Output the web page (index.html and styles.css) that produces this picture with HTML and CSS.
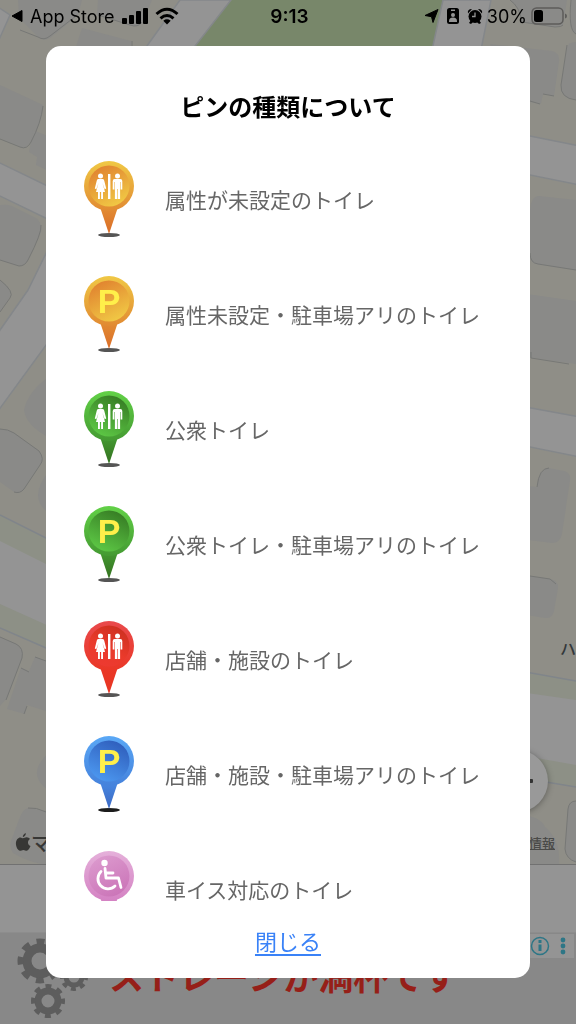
FILE: index.html
```html
<!DOCTYPE html>
<html lang="ja">
<head>
<meta charset="utf-8">
<meta name="viewport" content="width=device-width, initial-scale=1">
<title>ピンの種類について</title>
<link rel="stylesheet" href="styles.css">
</head>
<body>
<svg class="defs" aria-hidden="true">
  <defs>
    <linearGradient id="orange-rim" x1="0" y1="0" x2="0" y2="1"><stop offset="0" stop-color="#f0c845"/><stop offset="1" stop-color="#e18a32"/></linearGradient>
    <linearGradient id="orange-face" x1=".2" y1="0" x2=".7" y2="1"><stop offset="0" stop-color="#e0802f"/><stop offset="1" stop-color="#f1ca45"/></linearGradient>
    <linearGradient id="orange-tail" x1="0" y1="0" x2="0" y2="1"><stop offset="0" stop-color="#e28d33"/><stop offset="1" stop-color="#da6c28"/></linearGradient>
    <linearGradient id="green-rim" x1="0" y1="0" x2="0" y2="1"><stop offset="0" stop-color="#62d147"/><stop offset="1" stop-color="#449a32"/></linearGradient>
    <linearGradient id="green-face" x1=".8" y1="0" x2=".3" y2="1"><stop offset="0" stop-color="#357923"/><stop offset="1" stop-color="#5dc845"/></linearGradient>
    <linearGradient id="green-tail" x1="0" y1="0" x2="0" y2="1"><stop offset="0" stop-color="#449a32"/><stop offset="1" stop-color="#34701f"/></linearGradient>
    <linearGradient id="red-rim" x1="0" y1="0" x2="0" y2="1"><stop offset="0" stop-color="#e94a4c"/><stop offset="1" stop-color="#ea3726"/></linearGradient>
    <linearGradient id="red-face" x1=".8" y1="0" x2=".3" y2="1"><stop offset="0" stop-color="#cb3020"/><stop offset=".6" stop-color="#ea3a2b"/><stop offset="1" stop-color="#ed3a31"/></linearGradient>
    <linearGradient id="red-tail" x1="0" y1="0" x2="0" y2="1"><stop offset="0" stop-color="#ea3726"/><stop offset="1" stop-color="#e73523"/></linearGradient>
    <linearGradient id="blue-rim" x1="0" y1="0" x2="0" y2="1"><stop offset="0" stop-color="#5aa8f6"/><stop offset="1" stop-color="#4582dc"/></linearGradient>
    <linearGradient id="blue-face" x1=".8" y1="0" x2=".3" y2="1"><stop offset="0" stop-color="#2e5cba"/><stop offset="1" stop-color="#4c98f0"/></linearGradient>
    <linearGradient id="blue-tail" x1="0" y1="0" x2="0" y2="1"><stop offset="0" stop-color="#4788e2"/><stop offset="1" stop-color="#3c68c2"/></linearGradient>
    <linearGradient id="pink-rim" x1="0" y1="0" x2="0" y2="1"><stop offset="0" stop-color="#e5b0da"/><stop offset="1" stop-color="#d482c3"/></linearGradient>
    <linearGradient id="pink-face" x1=".2" y1="0" x2=".7" y2="1"><stop offset="0" stop-color="#dc9ace"/><stop offset="1" stop-color="#cb75b8"/></linearGradient>
    <symbol id="restroom" viewBox="0 0 50 76">
      <g fill="#fff">
        <circle cx="16.500" cy="15" r="2.500"/>
        <path d="M14.500 18h4q1.300 0 1.700 1.400l2 8-1.500.8-2.200-6.200 2.500 9h-2v7h-1.900v-7h-1.200v7H14v-7h-2l2.500-9-2.200 6.200-1.500-.8 2-8q.4-1.400 1.700-1.400z"/>
        <rect x="24" y="13" width="2.400" height="25"/>
        <circle cx="33.500" cy="15" r="2.500"/>
        <path d="M30.700 18h5.600q2 0 2 2v8.500h-1.700V21h-.5v17h-2.300V28h-.6v10h-2.300V21h-.5v7.500h-1.700V20q0-2 2-2z"/>
      </g>
    </symbol>
  </defs>
</svg>

<main class="screen">
  <section class="map" aria-label="地図">
    <svg class="map-art" viewBox="0 0 576 865" preserveAspectRatio="xMidYMin slice" aria-hidden="true">
      <rect width="576" height="865" fill="#8f8e87"/>
      <path fill="#78876a" d="M231 0h213l-11 50H192z"/>
      <g fill="#8d9086">
        <path d="M0 515l60 30v110L0 628z"/>
        <path d="M520 671l56 10v106l-56-9z"/>
      </g>
      <g fill="#949494" stroke="#84878a" stroke-width="1.500">
        <path d="M180 0h51l-39 50h-48z"/>
        <path d="M443 0h48l-10 50h-49z"/>
        <path d="M-2 7L10 15-2 42z"/>
        <path d="M-2 162l62 30v33L-2 195z"/>
        <path d="M60 225L28 290-2 333v78l62-85z"/>
        <path d="M520 134l60 12v39l-60-12z"/>
        <path d="M520 406l60 11v40l-60-12z"/>
      </g>
      <g fill="#949494">
        <path d="M0 541l60 30v60L0 604z"/>
        <path d="M520 692l56 8v65l-56-10z"/>
      </g>
      <g fill="none" stroke="#80858a" stroke-width="1.500">
        <path d="M0 515l60 30M0 628l60 26M520 671l56 10M540 781l36 6"/>
      </g>
      <g fill="#8a8a88">
        <path d="M18 0h64l-4 15q-14 12-28 23-6 4-12-1L19 18z"/>
        <path d="M98 0h54l-9 22q-3 5-10 4l-36-11z"/>
        <path d="M82 28l49 13v12H74z"/>
        <path d="M0 85l43 20q-1 17-12 36-4 8-11 6L0 139z"/>
        <path d="M33 130l20 8v35l-17-8 1-8-8-5z"/>
        <path d="M0 205q7-1 12 1l24 12q6 4 5 14L28 260q-3 6-9 6L0 260z"/>
        <path d="M0 280l8 7q3 4 2 10L0 312z"/>
        <path d="M50 376q-22 15-26 34 2 16 26 28z"/>
        <path d="M0 429q8 0 14 4l25 18q6 8 1 14L24 489q-4 5-10 3L0 482z"/>
        <path d="M50 470q-24 28 0 44z"/>
        <path d="M0 637l16 7q8 4 6 14L7 698l-7 8z"/>
        <path d="M35 657l17 6v50l-25-8-2 9-18-5 14-41 8 3z"/>
        <path d="M52 750q-28 23-4 40zM28 808l20 3v54q-18-2-35-12-4-6-2-12l9-24q3-8 8-9z"/>
        <path d="M510 0q10 7 12 22l33 5 8-2 4-25z"/>
        <path d="M571 0l-1 25q2 7 6 9V0z"/>
        <path d="M490 44l62 7q8 2 7 10l-5 35-11-2-2 10-30-5z"/>
        <path d="M576 42q-8 0-9 6l-6 37q-1 13 15 15z"/>
        <path d="M530 210q1-14 9-14l37 4v70l-40-6q-6-2-6-8z"/>
        <path d="M520 293l56 8v63l-56-8z"/>
        <path d="M520 485l17 2q2-19 12-19l15 3q7 2 6 9l-8 54q-2 9-10 9l-32-4z"/>
        <path d="M520 575l30 4q9 2 8 9l-4 23q-2 8-9 7l-25-4z"/>
        <path d="M576 801q-7 0-8 8l-3 40q1 10 11 13zM520 814q21 3 25 13 16 13 14 38h-39z"/>
      </g>
      <g fill="none" stroke="#777876" stroke-width="1">
        <path d="M20 30l18 7q6 4 12-1l26-20M98 15l32 10q8 3 12-3M132 41v5"/>
        <path d="M43 106q-2 17-12 36-4 8-11 5L0 139M41 225q1 8-13 35-3 6-9 6L0 260M0 280q15 12 10 18L0 312"/>
        <path d="M0 429q8 0 14 4l25 18q6 8 1 14L24 489q-4 5-10 3M0 637l16 7q8 4 6 14L6 700M35 657l11 4M21 668l8 4M27 706l-3 8M28 808q8-1 18 4"/>
        <path d="M510 0q10 7 12 22l33 5q7 0 8-2M571 0q-3 30 5 34M543 94l11 2M530 101l10 3M567 45l-6 40q-1 13 15 15M530 253q0 10 8 11l38 6M531 352v6l38 6M537 487q2-19 12-19M530 576l20 3 6 5M576 801q-7 0-8 8l-3 40q1 10 11 13"/>
      </g>
    </svg>
    <span class="place">ハ</span>
    <button class="map-button" type="button" aria-label="メニュー">
      <svg width="32" height="6" viewBox="0 0 32 6" aria-hidden="true"><g fill="#333"><rect x="0" y="1" width="4" height="4" rx="1"/><rect x="14" y="1" width="4" height="4" rx="1"/><rect x="28" y="1" width="4" height="4" rx="1"/></g></svg>
    </button>
    <div class="credits">
      <span class="brand">
        <svg width="16" height="20" viewBox="0 0 16 20" aria-hidden="true"><path fill="#373735" d="M10.800 1q.2 3-3 4.200Q7.800 2.300 10.800 1zM8 6.300c1 0 2-1 3.600-1 1.500 0 2.700.7 3.400 1.700-3 1.800-2.500 5.800.5 7-1 2.600-2.300 4.700-3.800 4.700-1.200 0-1.800-.8-3.300-.8s-2.200.8-3.400.8C3 18.700.9 15 .9 11.500c0-4 2.400-6.100 4.500-6.100C6.700 5.400 7.500 6.300 8 6.300z"/></svg>マップ
      </span>
      <a class="legal" href="#legal">法的情報</a>
    </div>
  </section>
  <div class="spacer"></div>
  <section class="ad">
    <svg class="gears" width="90" height="92" viewBox="0 0 90 92" aria-hidden="true">
      <g fill="none" stroke="#5d5d5d">
        <circle cx="40" cy="28" r="13" stroke-width="9"/>
        <circle cx="40" cy="28" r="19.500" stroke-width="6" stroke-dasharray="8 7.300" stroke-dashoffset="4"/>
        <circle cx="74" cy="44" r="8" stroke-width="5"/>
        <circle cx="74" cy="44" r="12" stroke-width="4" stroke-dasharray="5 4.420" stroke-dashoffset="2"/>
        <circle cx="48" cy="68" r="10" stroke-width="7"/>
        <circle cx="48" cy="68" r="15" stroke-width="4" stroke-dasharray="6 5.780" stroke-dashoffset="3"/>
      </g>
    </svg>
    <p class="ad-text">ストレージが満杯です</p>
    <div class="ad-badge">
      <svg width="44" height="24" viewBox="0 0 44 24" aria-hidden="true"><circle cx="10" cy="12" r="8.500" fill="none" stroke="#2d7686" stroke-width="1.500"/><path fill="#2d7686" d="M8.500 6h3v3h-3zM8.500 10.500h3V17h-3z"/><g fill="#2d7686"><circle cx="33" cy="6" r="2.400"/><circle cx="33" cy="12" r="2.400"/><circle cx="33" cy="18" r="2.400"/></g></svg>
    </div>
  </section>
</main>

<header class="status">
  <div class="status-side">
    <svg width="12" height="14" viewBox="0 0 12 14" aria-hidden="true"><path d="M1 7l10-5.500v11z" stroke="#000" stroke-linejoin="round"/></svg>
    <span class="back-app">App Store</span>
    <svg width="26" height="18" viewBox="0 0 26 18" aria-hidden="true"><rect x="0" y="11" width="5" height="6" rx="1"/><rect x="7" y="8" width="5" height="9" rx="1"/><rect x="14" y="4" width="5" height="13" rx="1"/><rect x="21" y="1" width="5" height="16" rx="1"/></svg>
    <svg width="24" height="18" viewBox="0 0 24 18" aria-hidden="true"><g fill="none" stroke="#000" stroke-width="3"><path d="M1.500 7q10.500-9.500 21 0M5.500 11.300q6.500-5.500 13 0"/></g><path d="M8.300 13.700q3.700-2.800 7.400 0L12 17.500z"/></svg>
  </div>
  <time class="clock">9:13</time>
  <div class="status-side status-end">
    <svg width="15" height="16" viewBox="0 0 15 16" aria-hidden="true"><path d="M14 1.500L9 14.500 7.500 8.700 1 7.500z" stroke="#000" stroke-linejoin="round"/></svg>
    <svg class="lead" width="12" height="18" viewBox="0 0 12 18" aria-hidden="true"><rect x="0" y="1" width="12" height="16" rx="2.500"/><path fill="#949494" d="M4 2.500h4V4H4zM2 14q0-3.500 4-3.500t4 3.500v1H2z"/><circle cx="6" cy="8" r="2" fill="#949494"/></svg>
    <svg class="lead" width="16" height="18" viewBox="0 0 16 18" aria-hidden="true"><circle cx="8" cy="9.500" r="6.500"/><path d="M1 6.500Q0 2 5 2zM15 6.500Q16 2 11 2zM2 16l2-3 2 2-2 2zM14 16l-2-3-2 2 2 2z"/><path d="M8 5.500v4H5" fill="none" stroke="#949494" stroke-width="1.300"/></svg>
    <span class="percent">30%</span>
    <svg width="37" height="18" viewBox="0 0 37 18" aria-hidden="true"><rect x="1" y="1" width="31" height="16" rx="4.500" fill="none" stroke="#5d5c5a" stroke-width="1.500"/><rect x="3" y="3" width="9" height="12" rx="2.500"/><path fill="#5d5c5a" d="M34 6.500q2 .5 2 2.500t-2 2.500z"/></svg>
  </div>
</header>

<div class="dialog" role="dialog" aria-modal="true" aria-labelledby="dialog-title">
  <h1 class="title" id="dialog-title">ピンの種類について</h1>
  <ul class="legend">
    <li class="entry">
      <svg class="pin" viewBox="0 0 50 76" aria-hidden="true"><ellipse cx="25" cy="74" rx="11" ry="2" fill="#555"/><path fill="url(#orange-tail)" d="M16 46h18l-9 27z"/><circle cx="25" cy="25" r="25" fill="url(#orange-rim)"/><circle cx="25" cy="25" r="20.500" fill="url(#orange-face)"/><use href="#restroom"/></svg>
      <span>属性が未設定のトイレ</span>
    </li>
    <li class="entry">
      <svg class="pin" viewBox="0 0 50 76" aria-hidden="true"><ellipse cx="25" cy="74" rx="11" ry="2" fill="#555"/><path fill="url(#orange-tail)" d="M16 46h18l-9 27z"/><circle cx="25" cy="25" r="25" fill="url(#orange-rim)"/><circle cx="25" cy="25" r="20.500" fill="url(#orange-face)"/><text class="parking" x="25" y="37">P</text></svg>
      <span>属性未設定・駐車場アリのトイレ</span>
    </li>
    <li class="entry">
      <svg class="pin" viewBox="0 0 50 76" aria-hidden="true"><ellipse cx="25" cy="74" rx="11" ry="2" fill="#555"/><path fill="url(#green-tail)" d="M16 46h18l-9 27z"/><circle cx="25" cy="25" r="25" fill="url(#green-rim)"/><circle cx="25" cy="25" r="20.500" fill="url(#green-face)"/><use href="#restroom"/></svg>
      <span>公衆トイレ</span>
    </li>
    <li class="entry">
      <svg class="pin" viewBox="0 0 50 76" aria-hidden="true"><ellipse cx="25" cy="74" rx="11" ry="2" fill="#555"/><path fill="url(#green-tail)" d="M16 46h18l-9 27z"/><circle cx="25" cy="25" r="25" fill="url(#green-rim)"/><circle cx="25" cy="25" r="20.500" fill="url(#green-face)"/><text class="parking" x="25" y="37">P</text></svg>
      <span>公衆トイレ・駐車場アリのトイレ</span>
    </li>
    <li class="entry">
      <svg class="pin" viewBox="0 0 50 76" aria-hidden="true"><ellipse cx="25" cy="74" rx="11" ry="2" fill="#555"/><path fill="url(#red-tail)" d="M16 46h18l-9 27z"/><circle cx="25" cy="25" r="25" fill="url(#red-rim)"/><circle cx="25" cy="25" r="20.500" fill="url(#red-face)"/><use href="#restroom"/></svg>
      <span>店舗・施設のトイレ</span>
    </li>
    <li class="entry">
      <svg class="pin" viewBox="0 0 50 76" aria-hidden="true"><ellipse cx="25" cy="74" rx="11" ry="2" fill="#1c1c1c"/><path fill="url(#blue-tail)" d="M16 46h18l-9 27z"/><circle cx="25" cy="25" r="25" fill="url(#blue-rim)"/><circle cx="25" cy="25" r="20.500" fill="url(#blue-face)"/><text class="parking" x="25" y="37">P</text></svg>
      <span>店舗・施設・駐車場アリのトイレ</span>
    </li>
    <li class="entry">
      <svg class="pin" viewBox="0 0 50 76" aria-hidden="true"><path fill="#d482c3" d="M16 46h18l-9 27z"/><circle cx="25" cy="25" r="25" fill="url(#pink-rim)"/><circle cx="25" cy="25" r="20.500" fill="url(#pink-face)"/><circle cx="20.500" cy="12" r="3.200" fill="#fff"/><path fill="none" stroke="#fff" stroke-width="2.800" stroke-linecap="round" stroke-linejoin="round" d="M21 17.500l1 9.500h12.500L37 36.500M22 22h7M17 20.500a10 10 0 1 0 14 14.500"/></svg>
      <span>車イス対応のトイレ</span>
    </li>
  </ul>
  <footer class="actions"><a class="close" href="#close">閉じる</a></footer>
</div>
</body>
</html>
```

FILE: styles.css
```css
* {
  box-sizing: border-box;
}

body {
  margin: 0;
  font-family: "Noto Sans CJK JP", sans-serif;
  background: #949494;
}

svg {
  display: block;
  flex: none;
}

.defs {
  position: absolute;
  width: 0;
  height: 0;
}

.screen {
  display: flex;
  flex-direction: column;
  height: 100vh;
  overflow: hidden;
}

.map {
  position: relative;
  flex: 1;
  display: flex;
  flex-direction: column;
  justify-content: flex-end;
  overflow: hidden;
  border-bottom: 1px solid #717171;
}

.map-art {
  position: absolute;
  inset: 0;
  width: 100%;
  height: 100%;
}

.place {
  position: absolute;
  top: 638px;
  left: 560px;
  font-size: 16px;
  font-weight: 500;
  line-height: 20px;
  color: #33383b;
}

.map-button {
  position: absolute;
  right: 28px;
  bottom: 52px;
  display: grid;
  place-items: center;
  width: 62px;
  height: 62px;
  padding: 0;
  border: 0;
  border-radius: 50%;
  background: #999;
  box-shadow: 0 1px 6px rgba(0, 0, 0, 0.35);
}

.credits {
  position: relative;
  display: flex;
  align-items: center;
  justify-content: space-between;
  height: 44px;
  padding: 0 21px 0 15px;
  color: #373735;
}

.brand {
  display: flex;
  align-items: center;
  font-size: 20px;
  font-weight: 500;
}

.legal {
  color: #4a4a48;
  font-size: 13px;
  font-weight: 500;
}

.spacer {
  flex: none;
  height: 67px;
}

.ad {
  position: relative;
  flex: none;
  display: flex;
  gap: 19px;
  height: 92px;
  overflow: hidden;
  border-top: 1px solid #8d8d8d;
  background: #888;
}

.ad-text {
  margin: 18px 0 0;
  color: #961f18;
  font-size: 35px;
  font-weight: bold;
  line-height: 48px;
  white-space: nowrap;
}

.ad-badge {
  position: absolute;
  top: 1px;
  right: 2px;
  background: #949494;
}

.status {
  position: fixed;
  inset: 0 0 auto;
  display: grid;
  grid-template-columns: 1fr auto 1fr;
  align-items: center;
  height: 32px;
  padding: 0 8px 0 11px;
  color: #000;
  font-family: Inter, sans-serif;
  font-size: 18px;
}

.status-side {
  display: flex;
  align-items: center;
  gap: 7px;
}

.status-end {
  justify-content: flex-end;
  gap: 4px;
}

.lead {
  margin-left: 4px;
}

.clock {
  font-size: 19px;
  font-weight: 600;
}

.dialog {
  position: fixed;
  inset: 46px;
  display: flex;
  flex-direction: column;
  overflow: hidden;
  border-radius: 15px;
  background: #fff;
}

.title {
  flex: none;
  margin: 0;
  padding: 42px 16px 17px;
  color: #000;
  font-size: 24px;
  line-height: 36px;
  text-align: center;
}

.legend {
  flex: 1;
  min-height: 0;
  margin: 0;
  padding: 0;
  overflow-y: auto;
  scrollbar-width: none;
  list-style: none;
}

.entry {
  display: flex;
  align-items: center;
  gap: 31px;
  height: 115px;
  padding-left: 38px;
  color: #666;
  font-size: 21px;
  line-height: 20px;
  white-space: nowrap;
}

.pin {
  width: 50px;
  height: 76px;
}

.parking {
  fill: #ffef4a;
  font: bold 34px "Liberation Sans", sans-serif;
  text-anchor: middle;
}

.actions {
  flex: none;
  display: flex;
  align-items: flex-start;
  justify-content: center;
  height: 77px;
  padding-top: 23px;
}

.close {
  color: #3a82f7;
  font-size: 22px;
  line-height: 32px;
  text-underline-offset: 4px;
}
```
